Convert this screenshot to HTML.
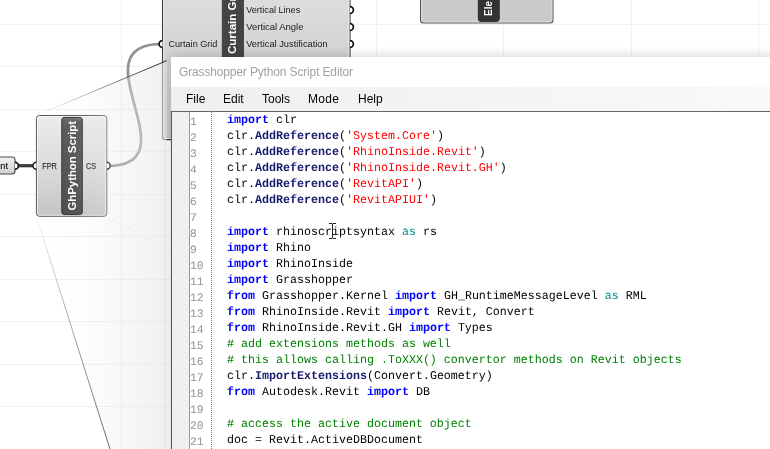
<!DOCTYPE html>
<html><head><meta charset="utf-8"><title>Grasshopper Python Script Editor</title>
<style>
html,body{margin:0;padding:0;background:#fff;}
body{width:770px;height:449px;overflow:hidden;position:relative;font-family:"Liberation Sans",sans-serif;}
#canvas{position:absolute;left:0;top:0;width:770px;height:449px;will-change:transform;}
#win{position:absolute;left:171px;top:56.5px;width:620px;height:600px;background:#fff;
 box-shadow:0 0 11px rgba(0,0,0,.2);}
#title{position:absolute;left:8px;top:8.2px;font-size:12px;letter-spacing:-0.15px;color:#a2a2a2;white-space:nowrap;}
#menu{position:absolute;left:0;top:30.5px;width:100%;height:24px;background:linear-gradient(to right,#efefef 0,#f9f9f9 600px);}
#menu span{position:absolute;top:4.5px;font-size:12px;color:#000;}
#ed{position:absolute;left:0;top:54.5px;width:100%;height:600px;border-top:1px solid #666;border-left:1px solid #555;background:#fff;}
#gut{position:absolute;left:0;top:0;width:17px;height:100%;background:#f0f0f0;border-right:1px solid #989898;}
#dots{position:absolute;left:39px;top:-1px;width:0;height:100%;border-left:1px dotted #777;}
pre{margin:0;font-family:"Liberation Mono",monospace;font-size:11.9px;line-height:16px;position:absolute;top:-0.3px;transform:scaleX(0.9804);transform-origin:0 0;text-rendering:geometricPrecision;}
#ln{left:18px;top:3.2px;color:#939393;font-size:11.5px;transform:scaleX(0.985);text-rendering:geometricPrecision;}
#code{left:55.4px;color:#000;}
.k{color:#0000ff;font-weight:bold}
.m{color:#191970;font-weight:bold}
.s{color:#ff0000}
.c{color:#008000}
.a{color:#008b8b}
</style></head><body>
<svg id="canvas" width="770" height="449" viewBox="0 0 770 449" font-family="'Liberation Sans',sans-serif">
 <defs>
  <linearGradient id="cg" x1="0" y1="0" x2="0" y2="1"><stop offset="0" stop-color="#ececec"/><stop offset="0.5" stop-color="#dcdcdc"/><stop offset="1" stop-color="#c4c4c4"/></linearGradient>
  <linearGradient id="cg2" gradientUnits="userSpaceOnUse" x1="0" y1="-20" x2="0" y2="138"><stop offset="0" stop-color="#e0e0e0"/><stop offset="0.48" stop-color="#d3d3d3"/><stop offset="1" stop-color="#c8c8c8"/></linearGradient>
  <linearGradient id="pg" x1="0" y1="0" x2="0" y2="1"><stop offset="0" stop-color="#f2f2f2"/><stop offset="1" stop-color="#cfcfcf"/></linearGradient>
  <linearGradient id="bar" x1="0" y1="0" x2="0" y2="1"><stop offset="0" stop-color="#747474"/><stop offset="0.05" stop-color="#585858"/><stop offset="1" stop-color="#4a4a4a"/></linearGradient>
  <linearGradient id="cone" gradientUnits="userSpaceOnUse" x1="36" y1="0" x2="167" y2="0"><stop offset="0" stop-color="#e8e8e8" stop-opacity="0"/><stop offset="0.3" stop-color="#e8e8e8" stop-opacity="0.05"/><stop offset="1" stop-color="#e8e8e8" stop-opacity="0.6"/></linearGradient>
  <linearGradient id="ln1" gradientUnits="userSpaceOnUse" x1="36" y1="0" x2="167" y2="0"><stop offset="0" stop-color="#333" stop-opacity="0"/><stop offset="0.3" stop-color="#333" stop-opacity="0.25"/><stop offset="1" stop-color="#222" stop-opacity="1"/></linearGradient>
  <linearGradient id="ln2" gradientUnits="userSpaceOnUse" x1="36" y1="0" x2="167" y2="0"><stop offset="0" stop-color="#333" stop-opacity="0.03"/><stop offset="0.2" stop-color="#333" stop-opacity="0.4"/><stop offset="0.55" stop-color="#333" stop-opacity="0.8"/><stop offset="1" stop-color="#222" stop-opacity="1"/></linearGradient>
 </defs>
 <!-- grid -->
 <g stroke="#f1f1f1" stroke-width="1" fill="none">
  <path d="M121.5 0V449M249.5 0V449M376.5 0V449M503.5 0V449M631.5 0V449M758.5 0V449"/>
  <path d="M0 24.5H770M0 66.5H770M0 109.5H770M0 151.5H770M0 194.5H770M0 236.5H770M0 279.5H770M0 321.5H770M0 364.5H770M0 406.5H770"/>
 </g>
 <!-- zoom cone from component to editor -->
 <line x1="112" y1="219.5" x2="171" y2="250" stroke="#bbb" stroke-width="0.8" stroke-dasharray="4 4" opacity="0.35"/>
 <!-- wires -->
 <path d="M107 166C195 166 74 44 162 44" fill="none" stroke="#8a8a8a" stroke-width="2.7"/>
 <path d="M107 166C195 166 74 44 162 44" fill="none" stroke="#999" stroke-width="1.2"/>
 <path d="M15 165.7H36" fill="none" stroke="#333" stroke-width="3.2"/>
 <path d="M15 165.7H36" fill="none" stroke="#484848" stroke-width="1.2"/>
 <!-- Curtain Grid component -->
 <g>
  <rect x="162.5" y="-20" width="187.5" height="159.6" rx="2.8" fill="url(#cg2)" stroke="#3c3c3c" stroke-width="1.1"/>
  <rect x="163.6" y="-20" width="185.3" height="158.5" rx="1.8" fill="none" stroke="#f2f2f2" stroke-width="0.9" opacity="0.8"/>
  <rect x="222.3" y="-20" width="21.2" height="150" rx="2.5" fill="#444" stroke="#333" stroke-width="0.8"/>
  <text transform="translate(236.3 54) rotate(-90)" font-size="11.7" font-weight="bold" fill="#fff" textLength="67.1" lengthAdjust="spacingAndGlyphs">Curtain Grid</text>
  <g font-size="9.5" fill="#1a1a1a">
   <text x="168.4" y="46.8" textLength="49" lengthAdjust="spacingAndGlyphs">Curtain Grid</text>
   <text x="246.2" y="12.8" textLength="54" lengthAdjust="spacingAndGlyphs">Vertical Lines</text>
   <text x="246.2" y="29.8" textLength="57.3" lengthAdjust="spacingAndGlyphs">Vertical Angle</text>
   <text x="246.2" y="46.8" textLength="81.5" lengthAdjust="spacingAndGlyphs">Vertical Justification</text>
  </g>
  <g fill="#fff" stroke="#111" stroke-width="1.7">
   <path d="M162.5 40.6A3.4 3.4 0 0 0 162.5 47.4"/>
   <path d="M350 6.6A3.4 3.4 0 0 1 350 13.4"/>
   <path d="M350 23.6A3.4 3.4 0 0 1 350 30.4"/>
   <path d="M350 40.6A3.4 3.4 0 0 1 350 47.4"/>
  </g>
 </g>
 <!-- Ele component -->
 <g>
  <rect x="420.5" y="-20" width="132.5" height="43" rx="3" fill="#cacaca" stroke="#555" stroke-width="1.1"/>
  <rect x="421.6" y="-20" width="130.3" height="41.9" rx="2" fill="none" stroke="#e4e4e4" stroke-width="0.9" opacity="0.8"/>
  <rect x="478.3" y="-20" width="21" height="41.5" rx="2.8" fill="#333" stroke="#222" stroke-width="0.8"/>
  <text transform="translate(492.4 15.9) rotate(-90)" font-size="11.7" font-weight="bold" fill="#fff" textLength="14.9" lengthAdjust="spacingAndGlyphs">Ele</text>
 </g>
 <!-- param -->
 <g>
  <rect x="-10" y="157" width="25" height="17" rx="3" fill="url(#pg)" stroke="#4a4a4a" stroke-width="1.1"/>
  <text x="0.3" y="169.4" font-size="9.5" fill="#222" stroke="#222" stroke-width="0.2" text-anchor="start" textLength="7.7" lengthAdjust="spacingAndGlyphs">nt</text>
  <path d="M15 162.3A3.4 3.4 0 0 1 15 169.1" fill="#fff" stroke="#111" stroke-width="1.7"/>
 </g>
 <!-- GhPython component -->
 <g>
  <rect x="36.4" y="115.5" width="70.4" height="100.8" rx="3" fill="url(#cg)" stroke="#585858" stroke-width="1"/>
  <rect x="37.5" y="116.6" width="68.2" height="98.6" rx="2" fill="none" stroke="#fafafa" stroke-width="0.9" opacity="0.8"/>
  <rect x="61.8" y="117.4" width="20.5" height="97.2" rx="2.6" fill="url(#bar)" stroke="#2c2c2c" stroke-width="1"/>
  <text transform="translate(76.2 210.5) rotate(-90)" font-size="11.7" font-weight="bold" fill="#fff" textLength="89.5" lengthAdjust="spacingAndGlyphs">GhPython Script</text>
  <g font-size="9.5" fill="#303030" stroke="#303030" stroke-width="0.25">
   <text x="42.2" y="169.4" textLength="14.7" lengthAdjust="spacingAndGlyphs">FPR</text>
   <text x="86" y="169.4" textLength="10.3" lengthAdjust="spacingAndGlyphs">CS</text>
  </g>
  <g fill="#fff" stroke="#222" stroke-width="1.6">
   <path d="M36.4 162.3A3.4 3.4 0 0 0 36.4 169.1"/>
   <path d="M106.8 162.3A3.4 3.4 0 0 1 106.8 169.1"/>
  </g>
 </g>
 <!-- cone lines -->
 <polygon points="36.4,115.4 166.7,60.7 166.7,628.5 36.4,216.4" fill="url(#cone)"/>
 <line x1="36.4" y1="115.4" x2="166.7" y2="60.7" stroke="url(#ln1)" stroke-width="1"/>
 <line x1="36.4" y1="216.4" x2="166.7" y2="628.5" stroke="url(#ln2)" stroke-width="0.9"/>
</svg>
<div id="win">
 <div id="title">Grasshopper Python Script Editor</div>
 <div id="menu"><span style="left:15px">File</span><span style="left:52px">Edit</span><span style="left:91px">Tools</span><span style="left:137px;letter-spacing:0.3px">Mode</span><span style="left:187px">Help</span></div>
 <div id="ed"><div id="gut"></div><div id="dots"></div>
<pre id="ln">1
2
3
4
5
6
7
8
9
10
11
12
13
14
15
16
17
18
19
20
21</pre>
<pre id="code"><span class="k">import</span> clr
clr.<span class="m">AddReference</span>(<span class="s">'System.Core'</span>)
clr.<span class="m">AddReference</span>(<span class="s">'RhinoInside.Revit'</span>)
clr.<span class="m">AddReference</span>(<span class="s">'RhinoInside.Revit.GH'</span>)
clr.<span class="m">AddReference</span>(<span class="s">'RevitAPI'</span>)
clr.<span class="m">AddReference</span>(<span class="s">'RevitAPIUI'</span>)

<span class="k">import</span> rhinoscriptsyntax <span class="a">as</span> rs
<span class="k">import</span> Rhino
<span class="k">import</span> RhinoInside
<span class="k">import</span> Grasshopper
<span class="k">from</span> Grasshopper.Kernel <span class="k">import</span> GH_RuntimeMessageLevel <span class="a">as</span> RML
<span class="k">from</span> RhinoInside.Revit <span class="k">import</span> Revit, Convert
<span class="k">from</span> RhinoInside.Revit.GH <span class="k">import</span> Types
<span class="c"># add extensions methods as well</span>
<span class="c"># this allows calling .ToXXX() convertor methods on Revit objects</span>
clr.<span class="m">ImportExtensions</span>(Convert.Geometry)
<span class="k">from</span> Autodesk.Revit <span class="k">import</span> DB

<span class="c"># access the active document object</span>
doc = Revit.ActiveDBDocument</pre>
 <svg style="position:absolute;left:156px;top:110px" width="9" height="18" viewBox="0 0 9 18"><path d="M1 1.5H4M5 1.5H8M4.5 1.5V16.5M1 16.5H4M5 16.5H8" stroke="#222" stroke-width="1" fill="none"/></svg>
 </div>
</div>
</body></html>
